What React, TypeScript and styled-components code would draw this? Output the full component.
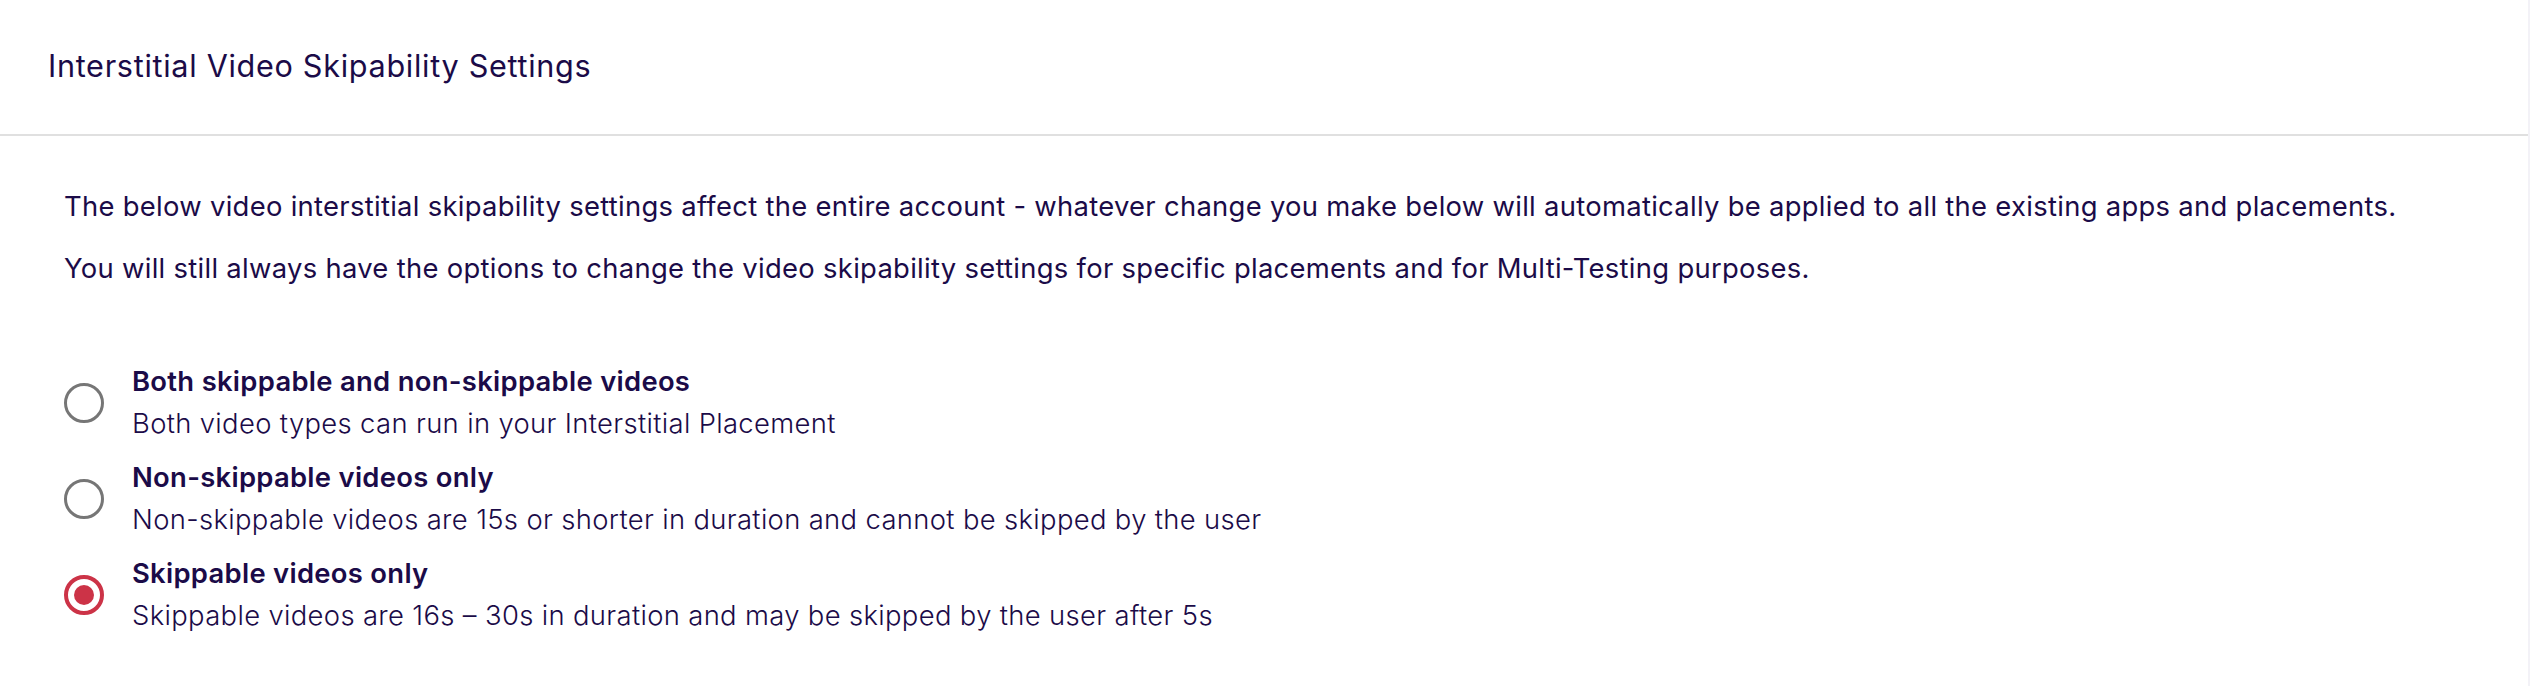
import React, { useState } from "react";
import styled, { createGlobalStyle } from "styled-components";

const GlobalStyle = createGlobalStyle`
  html, body {
    margin: 0;
    padding: 0;
    background: #f3f2f7;
  }
  body {
    font-family: Inter, "Noto Sans", "Liberation Sans", sans-serif;
    color: #1b0b48;
  }
  * { box-sizing: border-box; }
`;

const Card = styled.div`
  width: calc(100% - 2px);
  height: 686px;
  background: #ffffff;
  display: flex;
  flex-direction: column;
`;

const Header = styled.header`
  height: 136px;
  padding: 0 48px 2px;
  display: flex;
  align-items: center;
  border-bottom: 2px solid #e0e0e0;
`;

const Title = styled.h1`
  margin: 0;
  font-size: 30.6px;
  font-weight: 400;
  letter-spacing: 0.7px;
  line-height: 40px;
  color: #1b0b48;
`;

const Body = styled.div`
  padding: 51px 64px 0;
  display: flex;
  flex-direction: column;
`;

const Paragraph = styled.p`
  margin: 0 0 23px;
  font-size: 27.4px;
  letter-spacing: 0.3px;
  line-height: 39px;
  color: #1b0b48;
`;

const Options = styled.div`
  margin-top: 49px;
  display: flex;
  flex-direction: column;
  gap: 12px;
`;

const Option = styled.label`
  display: flex;
  align-items: center;
  gap: 28px;
  cursor: pointer;
`;

const Radio = styled.span<{ $checked: boolean }>`
  flex: none;
  width: 40px;
  height: 40px;
  margin-top: 1px;
  border-radius: 50%;
  border: ${(p) => (p.$checked ? "4px solid #cc3347" : "3px solid #767676")};
  display: flex;
  align-items: center;
  justify-content: center;

  &::after {
    content: "";
    width: 20px;
    height: 20px;
    border-radius: 50%;
    background: #cc3347;
    display: ${(p) => (p.$checked ? "block" : "none")};
  }
`;

const OptionText = styled.div`
  display: flex;
  flex-direction: column;
`;

const OptionTitle = styled.span`
  font-size: 27.4px;
  font-weight: 600;
  letter-spacing: 0.3px;
  line-height: 42px;
  color: #1b0b48;
`;

const OptionDesc = styled.span`
  font-size: 27.4px;
  font-weight: 300;
  letter-spacing: 0.35px;
  line-height: 42px;
  color: #1b0b48;
`;

const options = [
  {
    id: "both",
    title: "Both skippable and non-skippable videos",
    desc: "Both video types can run in your Interstitial Placement",
  },
  {
    id: "non",
    title: "Non-skippable videos only",
    desc: "Non-skippable videos are 15s or shorter in duration and cannot be skipped by the user",
  },
  {
    id: "skip",
    title: "Skippable videos only",
    desc: "Skippable videos are 16s – 30s in duration and may be skipped by the user after 5s",
  },
];

export default function App() {
  const [selected, setSelected] = useState("skip");
  return (
    <>
      <GlobalStyle />
      <Card>
        <Header>
          <Title>Interstitial Video Skipability Settings</Title>
        </Header>
        <Body>
          <Paragraph>
            The below video interstitial skipability settings affect the entire account - whatever change you make below will automatically be applied to all the existing apps and placements.
          </Paragraph>
          <Paragraph>
            You will still always have the options to change the video skipability settings for specific placements and for Multi-Testing purposes.
          </Paragraph>
          <Options role="radiogroup">
            {options.map((o) => (
              <Option key={o.id} onClick={() => setSelected(o.id)}>
                <Radio $checked={selected === o.id} role="radio" aria-checked={selected === o.id} />
                <OptionText>
                  <OptionTitle>{o.title}</OptionTitle>
                  <OptionDesc>{o.desc}</OptionDesc>
                </OptionText>
              </Option>
            ))}
          </Options>
        </Body>
      </Card>
    </>
  );
}
